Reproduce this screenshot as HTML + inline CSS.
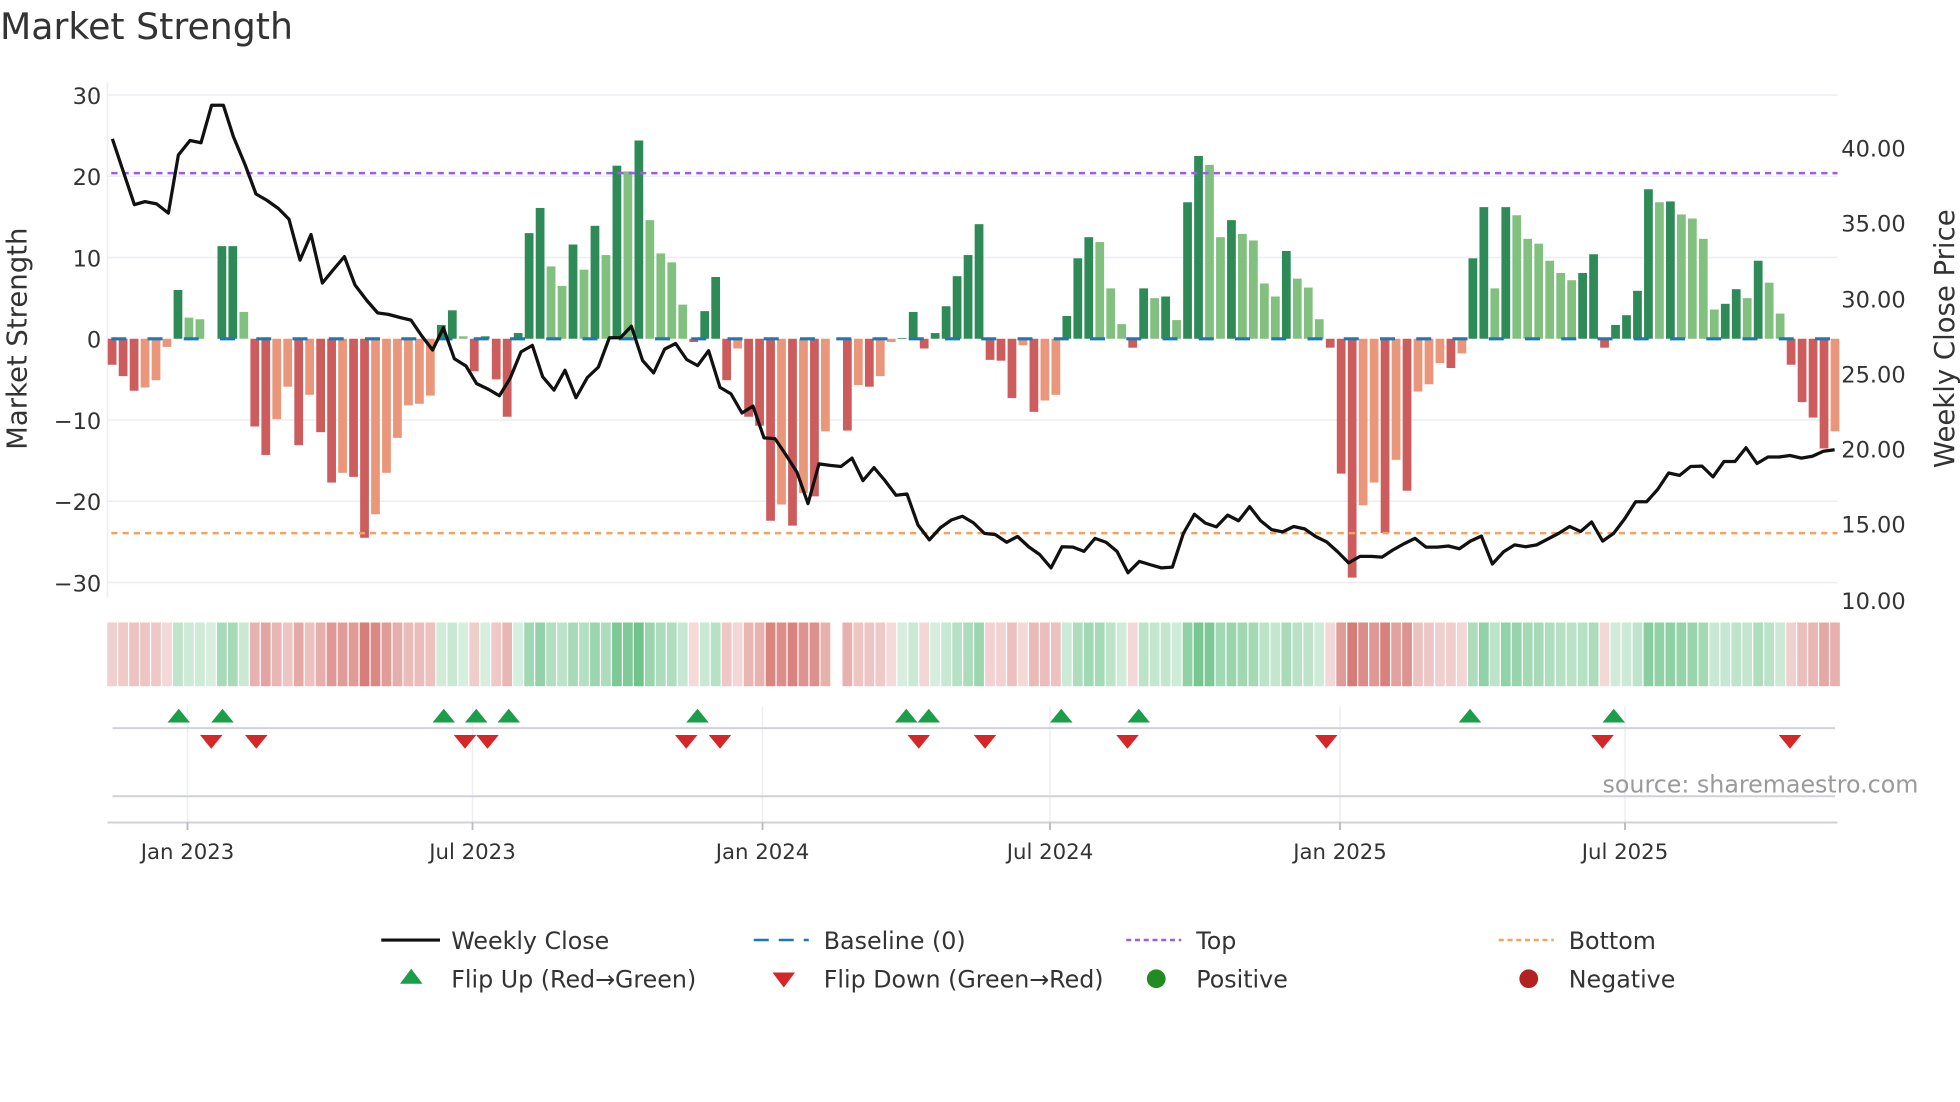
<!DOCTYPE html>
<html><head><meta charset="utf-8"><style>
html,body{margin:0;padding:0;background:#fff;}
svg{display:block;}
text{font-family:"DejaVu Sans","Liberation Sans",sans-serif;fill:#333;}
</style></head><body>
<svg id="s" width="1960" height="1102" viewBox="0 0 1568 881.6" xmlns="http://www.w3.org/2000/svg">
<text x="0" y="31" font-size="29">Market Strength</text>
<g stroke="#eceef4" stroke-width="1.2">
<line x1="86" x2="1470" y1="76" y2="76"/><line x1="86" x2="1470" y1="141" y2="141"/><line x1="86" x2="1470" y1="206" y2="206"/><line x1="86" x2="1470" y1="336" y2="336"/><line x1="86" x2="1470" y1="401" y2="401"/><line x1="86" x2="1470" y1="466" y2="466"/>
<line x1="86" x2="86" y1="66" y2="478"/>
<line x1="150" x2="150" y1="565" y2="658"/><line x1="378" x2="378" y1="565" y2="658"/><line x1="610" x2="610" y1="565" y2="658"/><line x1="840" x2="840" y1="565" y2="658"/><line x1="1072" x2="1072" y1="565" y2="658"/><line x1="1300" x2="1300" y1="565" y2="658"/>
</g>
<g font-size="18" text-anchor="end">
<text x="81" y="83">30</text><text x="81" y="148">20</text><text x="81" y="213">10</text><text x="81" y="278">0</text><text x="81" y="343">−10</text><text x="81" y="408">−20</text><text x="81" y="473">−30</text>
</g>
<g font-size="18">
<text x="1473" y="125">40.00</text><text x="1473" y="185">35.00</text><text x="1473" y="246">30.00</text><text x="1473" y="306">25.00</text><text x="1473" y="366">20.00</text><text x="1473" y="426">15.00</text><text x="1473" y="487">10.00</text>
</g>
<text font-size="22" transform="translate(21,271) rotate(-90)" text-anchor="middle">Market Strength</text>
<text font-size="22" transform="translate(1563,271) rotate(-90)" text-anchor="middle">Weekly Close Price</text>
<g id="bars"></g>
<line x1="89" x2="1470" y1="271" y2="271" stroke="#1f77b4" stroke-width="2.5" stroke-dasharray="12,17"/>
<line x1="89" x2="1470" y1="138.5" y2="138.5" stroke="#9b5de5" stroke-width="2" stroke-dasharray="5,4"/>
<line x1="89" x2="1470" y1="426.5" y2="426.5" stroke="#f4a261" stroke-width="2" stroke-dasharray="5,4"/>
<polyline id="price" fill="none" stroke="#111" stroke-width="2.6" stroke-linejoin="round" points=""/>
<g id="strip"></g>
<line x1="90" x2="1468" y1="582.5" y2="582.5" stroke="#d0d2d8" stroke-width="1.6"/>
<line x1="90" x2="1468" y1="637" y2="637" stroke="#d0d2d8" stroke-width="1.6"/>
<line x1="86" x2="1470" y1="658" y2="658" stroke="#d0d2d8" stroke-width="1.6"/>
<g stroke="#bbb" stroke-width="1.5"><line x1="150" x2="150" y1="658" y2="664"/><line x1="378" x2="378" y1="658" y2="664"/><line x1="610" x2="610" y1="658" y2="664"/><line x1="840" x2="840" y1="658" y2="664"/><line x1="1072" x2="1072" y1="658" y2="664"/><line x1="1300" x2="1300" y1="658" y2="664"/></g>
<g id="flips"></g>
<text x="1282" y="634" font-size="19" style="fill:#9a9a9a">source: sharemaestro.com</text>
<g font-size="17" text-anchor="middle">
<text x="150" y="687">Jan 2023</text><text x="378" y="687">Jul 2023</text><text x="610" y="687">Jan 2024</text><text x="840" y="687">Jul 2024</text><text x="1072" y="687">Jan 2025</text><text x="1300" y="687">Jul 2025</text>
</g>
<g font-size="19">
<line x1="305" x2="352" y1="752" y2="752" stroke="#111" stroke-width="2.5"/><text x="361" y="759">Weekly Close</text>
<line x1="603" x2="647" y1="752" y2="752" stroke="#1f77b4" stroke-width="2" stroke-dasharray="12,8"/><text x="659" y="759">Baseline (0)</text>
<line x1="901" x2="945" y1="752" y2="752" stroke="#9b5de5" stroke-width="2" stroke-dasharray="4,3"/><text x="957" y="759">Top</text>
<line x1="1199" x2="1243" y1="752" y2="752" stroke="#f4a261" stroke-width="2" stroke-dasharray="4,3"/><text x="1255" y="759">Bottom</text>
<polygon points="320,787 338,787 329,775" fill="#1a9e4a"/><text x="361" y="790">Flip Up (Red→Green)</text>
<polygon points="618,778 636,778 627,790" fill="#d62728"/><text x="659" y="790">Flip Down (Green→Red)</text>
<circle cx="925" cy="783" r="7.5" fill="#228b22"/><text x="957" y="790">Positive</text>
<circle cx="1223" cy="783" r="7.5" fill="#b22222"/><text x="1255" y="790">Negative</text>
</g>
</svg>
<script>
var v=[-3.2,-4.6,-6.4,-6,-5.1,-1,6,2.6,2.4,0,11.4,11.4,3.3,-10.8,-14.3,-9.9,-5.9,-13.1,-6.9,-11.5,-17.7,-16.5,-17,-24.5,-21.6,-16.5,-12.2,-8.2,-8,-7,1.7,3.5,0.3,-4,0.3,-5,-9.6,0.7,13,16.1,8.9,6.5,11.6,8.5,13.9,10.3,21.3,20.6,24.4,14.6,10.5,9.4,4.2,-0.4,3.4,7.6,-5.1,-1.2,-9.6,-10.7,-22.4,-20.4,-23,-19,-19.4,-11.4,0,-11.3,-5.7,-5.9,-4.6,-0.4,0.1,3.3,-1.2,0.7,4,7.7,10.3,14.1,-2.6,-2.7,-7.3,-0.8,-9,-7.6,-6.9,2.8,9.9,12.5,11.9,6.2,1.8,-1.1,6.2,5,5.2,2.3,16.8,22.5,21.4,12.5,14.6,12.9,12.1,6.8,5.2,10.8,7.4,6.3,2.4,-1.1,-16.6,-29.4,-20.5,-17.7,-23.9,-14.9,-18.7,-6.5,-5.6,-3,-3.6,-1.8,9.9,16.2,6.2,16.2,15.2,12.3,11.7,9.6,8.1,7.2,8.1,10.4,-1.1,1.7,2.9,5.9,18.4,16.8,16.9,15.3,14.8,12.3,3.6,4.3,6.1,5,9.6,6.9,3.1,-3.2,-7.8,-9.7,-13.5,-11.4];
var NS="http://www.w3.org/2000/svg",b=document.getElementById('bars'),st=document.getElementById('strip');
var x0=89.7,step=(1468-89.7)/(v.length-1),w=7,y0=271,sc=6.5;
function r(g,x,y,ww,h,f,o){var e=document.createElementNS(NS,'rect');e.setAttribute('x',x);e.setAttribute('y',y);e.setAttribute('width',ww);e.setAttribute('height',h);e.setAttribute('fill',f);if(o!=null)e.setAttribute('fill-opacity',o);g.appendChild(e);}
for(var i=0;i<v.length;i++){var a=v[i],p=i?v[i-1]:a,x=x0+i*step-w/2,c;
if(a>=0)c=(a>=p)?'#2e8b57':'#81c07f';else c=(a<=p)?'#cd5c5c':'#e9967a';
var h=Math.abs(a)*sc;r(b,x,a>=0?y0-h:y0,w,h,c);
if(i!==66){var pos=a>0||(a===0&&p>0);var o=0.2+0.55*Math.min(Math.abs(a),25)/25;r(st,x0+i*step-3.9,498,7.8,51,pos?'#3cae62':'#c8504a',o);}}
var segs=[[84,"22,128 88,300 120,292 155,298 190,322 220,170 255,132 288,138 320,40 355,40 385,122 420,195 453,272 485,288 520,310 552,338 585,445 618,378 652,505 685,470 718,436 750,510 785,550 818,583 850,587 885,595 918,602 950,643 983,680 1015,622 1048,703 1083,722 1115,768 1150,783 1183,800 1215,755 1248,685 1282,668 1313,750"],
[432,"8,748 42,785 75,733 108,805 142,752 175,725 208,648 241,648 274,618 308,708 341,740 374,678 407,663 440,705 473,721 506,682 540,778 573,795 606,845 639,827 672,910 705,912 738,955 771,1000 804,1082 837,978 870,982 903,985 936,963 969,1022 1002,988 1035,1022 1068,1060 1101,1057 1134,1138 1168,1177 1201,1145 1234,1125 1267,1115 1300,1132 1333,1160"],
[780,"28,1157 61,1163 95,1183 128,1168 161,1195 194,1215 228,1250 261,1195 294,1196 327,1207 360,1173 393,1183 426,1207 459,1263 493,1233 526,1242 559,1250 592,1248 625,1160 658,1110 691,1133 724,1143 758,1112 791,1127 824,1090 857,1127 890,1150 923,1156 956,1142 989,1148 1022,1168 1055,1182 1088,1208 1121,1237 1155,1220 1188,1220 1221,1222 1254,1203 1287,1187 1320,1173"],
[1128,"48,1196 82,1196 115,1193 148,1200 181,1180 214,1167 247,1240 281,1208 314,1190 347,1195 380,1190 413,1175 446,1160 479,1142 512,1155 545,1130 578,1180 611,1160 644,1122 677,1077 710,1077 743,1045 776,1002 809,1008 842,985 876,984 909,1012 942,972 975,972 1008,936 1041,977 1074,960 1107,960 1140,956 1174,963 1207,958 1240,945 1274,941"]];
var pts=[];segs.forEach(function(s){s[1].split(' ').forEach(function(q){var c=q.split(',');var X=s[0]+(+c[0])/3.75,Y=72+(+c[1])*0.30581;if(!pts.length||X>pts[pts.length-1][0]+2)pts.push([X,Y]);});});
document.getElementById('price').setAttribute('points',pts.map(function(p){return p[0].toFixed(1)+','+p[1].toFixed(1)}).join(' '));
var f=document.getElementById('flips');
function t(x,up){var e=document.createElementNS(NS,'polygon');if(up)e.setAttribute('points',(x-9)+',578 '+(x+9)+',578 '+x+',567');else e.setAttribute('points',(x-9)+',588 '+(x+9)+',588 '+x+',599');e.setAttribute('fill',up?'#1a9e4a':'#d62728');f.appendChild(e);}
[143,178,355,381,407,558,725,743,849,911,1176,1291].forEach(function(x){t(x,1)});
[169,205,372,390,549,576,735,788,902,1061,1282,1432].forEach(function(x){t(x,0)});
</script>
</body></html>
